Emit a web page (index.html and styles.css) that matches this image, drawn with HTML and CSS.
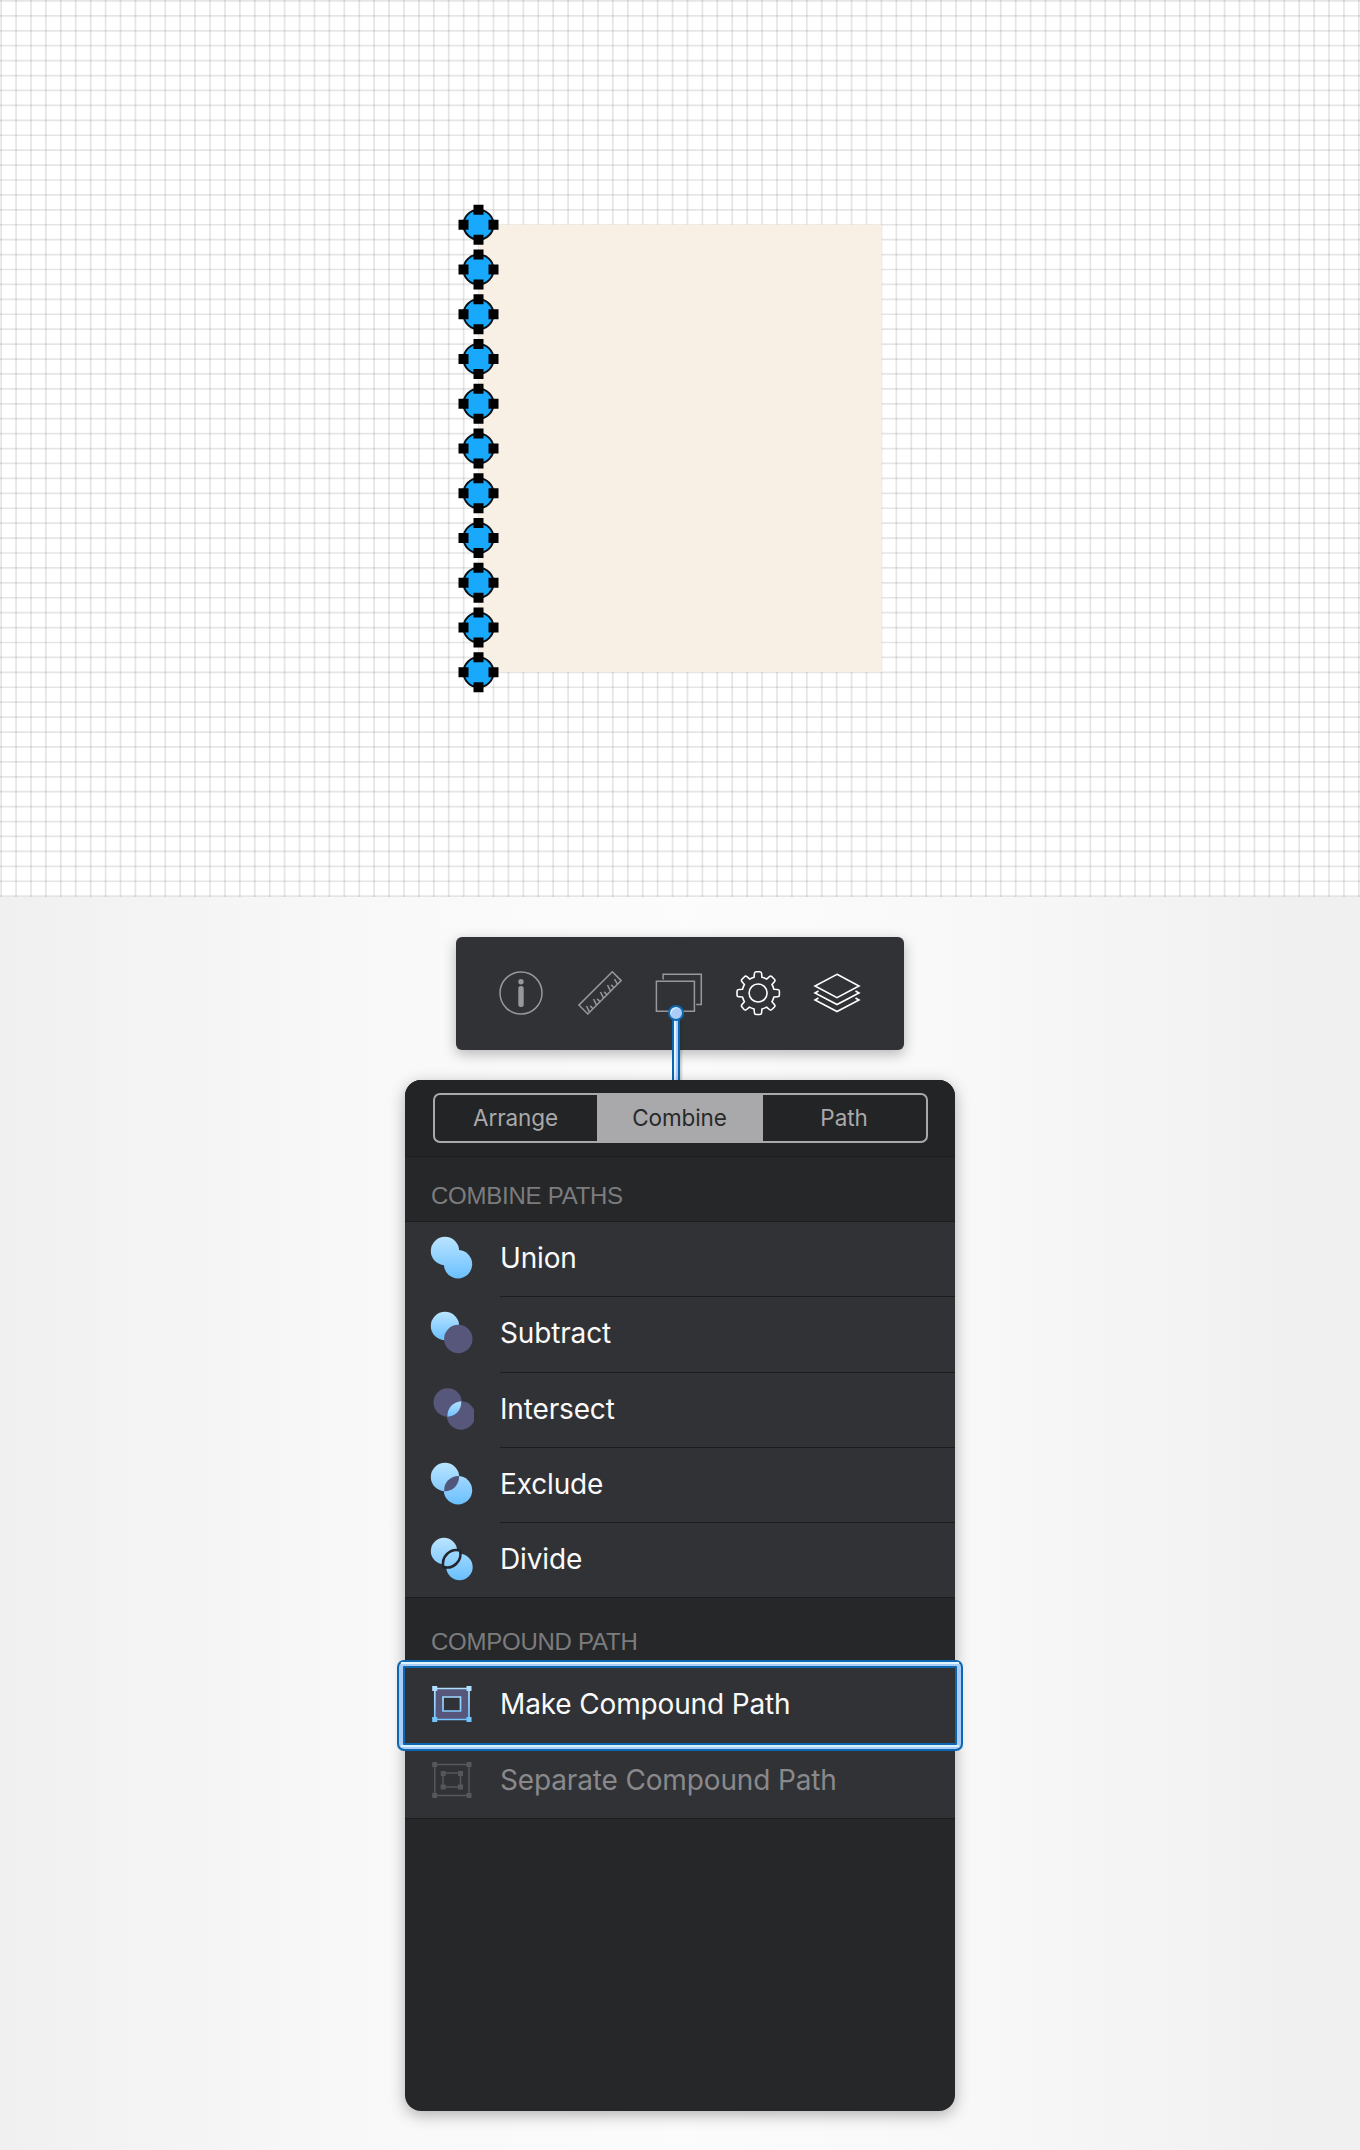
FILE: index.html
```html
<!DOCTYPE html>
<html lang="en">
<head>
<meta charset="utf-8">
<title>Combine Paths</title>
<link rel="stylesheet" href="styles.css">
</head>
<body>
<section class="canvas">
  <svg class="artwork" width="1360" height="897" viewBox="0 0 1360 897">
    <defs>
      <g id="node">
        <circle r="15" fill="#18a9fc" stroke="#0a1013" stroke-width="2"/>
        <path d="M-5-20H5v10H-5zM-5 10H5v10H-5zM-20-5h10V5h-10zM10-5h10V5H10z" fill="#000"/>
      </g>
    </defs>
    <g stroke="#828282" stroke-opacity=".21" stroke-dasharray="1.7 13.22">
      <path d="M.3 448.5H1360" stroke-width="897"/>
      <path d="M680 .1V897" stroke-width="1360"/>
    </g>
    <rect x="478.5" y="224.5" width="403" height="447.5" fill="#f8efe5"/>
    <use href="#node" x="478.5" y="224.7"/>
    <use href="#node" x="478.5" y="269.5"/>
    <use href="#node" x="478.5" y="314.3"/>
    <use href="#node" x="478.5" y="359"/>
    <use href="#node" x="478.5" y="403.8"/>
    <use href="#node" x="478.5" y="448.5"/>
    <use href="#node" x="478.5" y="493.3"/>
    <use href="#node" x="478.5" y="538"/>
    <use href="#node" x="478.5" y="582.8"/>
    <use href="#node" x="478.5" y="627.5"/>
    <use href="#node" x="478.5" y="672.3"/>
  </svg>
</section>
<main class="workspace">
  <nav class="toolbar">
    <svg width="48" height="48" viewBox="0 0 48 48" fill="none" stroke="#98989b" stroke-width="1.5">
      <circle cx="24" cy="24" r="21"/><circle cx="24" cy="12.7" r="2.7" fill="#98989b" stroke="none"/><rect x="21.3" y="17" width="5.4" height="21" rx="2.5" fill="#98989b" stroke="none"/>
    </svg>
    <svg width="48" height="48" viewBox="0 0 48 48" fill="none" stroke="#98989b" stroke-width="1.5">
      <path d="M36.3 2.7 45.2 11.6 11.8 45 2.9 36.1zM13.5 43.2l-3-6.200M17 39.700l-2.800-2.800M20.500 36.200l-3-6.200M24 32.700l-2.800-2.800M27.500 29.200l-3-6.200M31 25.700l-2.800-2.800M34.500 22.200l-3-6.200M38 18.700l-2.800-2.800M41.500 15.200l-3-5"/>
    </svg>
    <svg width="48" height="48" viewBox="0 0 48 48" fill="none" stroke="#98989b" stroke-width="1.5">
      <path d="M1.4 12.3h38v30h-38zM8.1 10.5V5.2h38.2v30.2h-5"/>
    </svg>
    <svg width="48" height="48" viewBox="0 0 48 48" fill="none" stroke="#fff" stroke-width="1.6" stroke-linejoin="round">
      <circle cx="24.1" cy="24" r="9"/>
      <path d="M20.4 4.5Q20.5 2.7 22.2 2.7h3.6q1.7 0 1.8 1.8l.3 3.7q2.6.7 4.7 1.9l2.8-2.4q1.3-1.1 2.5 0l2.5 2.5q1.1 1.2 0 2.5l-2.4 2.8q1.2 2.1 1.9 4.7l3.7.3q1.8.1 1.8 1.8v3.6q0 1.7-1.8 1.8l-3.7.3q-.7 2.6-1.9 4.7l2.4 2.8q1.1 1.3 0 2.5l-2.5 2.5q-1.2 1.1-2.5 0l-2.8-2.4q-2.1 1.2-4.7 1.9l-.3 3.7q-.1 1.8-1.8 1.8h-3.6q-1.7 0-1.8-1.8l-.3-3.7q-2.6-.7-4.7-1.9l-2.8 2.4q-1.3 1.1-2.5 0L8 38q-1.1-1.2 0-2.5l2.4-2.8Q9.2 30.6 8.5 28l-3.7-.3Q3 27.6 3 25.9v-3.6q0-1.7 1.8-1.8l3.7-.3q.7-2.6 1.9-4.7L8 12.7q-1.1-1.3 0-2.5l2.5-2.5q1.2-1.1 2.5 0l2.8 2.4q2.1-1.2 4.3-1.9z"/>
    </svg>
    <svg width="48" height="48" viewBox="0 0 48 48" fill="none" stroke="#fff" stroke-width="1.6">
      <path d="M24 5.3 46 17 24 28.7 2 17zM5.5 22 2 24l22 11.5L46 24l-3.500-2M5.500 29 2 31l22 11.500L46 31l-3.500-2"/>
    </svg>
  </nav>

  <div class="connector"></div><div class="connector-knob"></div>

  <section class="panel">
    <header class="panel-head">
      <div class="tabs"><button class="tab">Arrange</button><button class="tab active">Combine</button><button class="tab">Path</button></div>
    </header>
    <h2 class="group-title">COMBINE PATHS</h2>
    <ul class="group">
      <li class="row">
        <svg class="icon" width="46" height="46" viewBox="0 0 46 46">
          <defs>
            <linearGradient id="sky" gradientUnits="userSpaceOnUse" x1="0" y1="2" x2="0" y2="44"><stop offset="0" stop-color="#b9e4ff"/><stop offset="1" stop-color="#6abfff"/></linearGradient>
            <linearGradient id="lens" gradientUnits="userSpaceOnUse" x1="0" y1="14" x2="0" y2="32"><stop offset="0" stop-color="#b9e4ff"/><stop offset="1" stop-color="#6abfff"/></linearGradient>
            <linearGradient id="disc" gradientUnits="userSpaceOnUse" x1="0" y1="2" x2="0" y2="30"><stop offset="0" stop-color="#b9e4ff"/><stop offset="1" stop-color="#6abfff"/></linearGradient>
          </defs>
          <g fill="url(#sky)"><circle cx="16" cy="16" r="14.2"/><circle cx="29" cy="29.200" r="14.200"/></g>
        </svg><span class="label">Union</span></li>
      <li class="row">
        <svg class="icon" width="46" height="46" viewBox="0 0 46 46"><circle cx="16" cy="16" r="14.200" fill="url(#disc)"/><circle cx="29.300" cy="29" r="14.200" fill="#56577a"/></svg><span class="label">Subtract</span></li>
      <li class="row">
        <svg class="icon" width="46" height="46" viewBox="0 0 46 46"><clipPath id="cut"><rect width="45" height="46"/></clipPath><g clip-path="url(#cut)"><circle cx="18.700" cy="16.500" r="14.200" fill="#56577a"/><circle cx="32" cy="29.500" r="14.200" fill="#56577a"/></g><path d="M32.200 15.300A14.200 14.200 0 0 1 18.500 30.700A14.200 14.200 0 0 1 32.200 15.300z" fill="url(#lens)"/></svg><span class="label">Intersect</span></li>
      <li class="row">
        <svg class="icon" width="46" height="46" viewBox="0 0 46 46"><g fill="url(#sky)"><circle cx="16" cy="16" r="14.200"/><circle cx="29" cy="29.200" r="14.200"/></g><path d="M30 14.900A14.200 14.200 0 0 1 15.200 30.300A14.200 14.200 0 0 1 30 14.900z" fill="#51577c"/></svg><span class="label">Exclude</span></li>
      <li class="row">
        <svg class="icon" width="46" height="46" viewBox="0 0 46 46"><g fill="url(#sky)"><circle cx="15" cy="15" r="13.200"/><circle cx="30.500" cy="31" r="13.200"/></g><path d="M31 14.500A13.500 13.500 0 0 1 14.500 31A13.500 13.500 0 0 1 31 14.500z" fill="url(#sky)" stroke="#24262d" stroke-width="2.500"/></svg><span class="label">Divide</span></li>
    </ul>
    <h2 class="group-title second">COMPOUND PATH</h2>
    <ul class="group">
      <li class="row selected">
        <svg class="icon" width="46" height="46" viewBox="0 0 46 46">
          <path d="M5.800 7.500H40v31H5.800zM13.500 16v14h18V16z" fill="#56577a" fill-rule="evenodd"/>
          <path d="M5.800 7.500H40v31H5.800zM14 16h17.500v14H14z" fill="none" stroke="url(#sky)" stroke-width="1.700"/>
          <path d="M3.200 5h5v5h-5zM37.500 5h5v5h-5zM3.200 36h5v5h-5zM37.500 36h5v5h-5z" fill="url(#sky)"/>
        </svg><span class="label">Make Compound Path</span></li>
      <li class="row disabled">
        <svg class="icon" width="46" height="46" viewBox="0 0 46 46">
          <path d="M5.800 7.500H40v31H5.800zM14 16h17.500v14H14z" fill="none" stroke="#56575a" stroke-width="1.500"/>
          <path d="M3.200 5h5v5h-5zM37.500 5h5v5h-5zM3.200 36h5v5h-5zM37.500 36h5v5h-5zM11.700 14h5v5h-5zM29 14h5v5h-5zM11.700 27.500h5v5h-5zM29 27.500h5v5h-5z" fill="#56575a"/>
        </svg><span class="label">Separate Compound Path</span></li>
    </ul>
    <div class="focus-frame"></div>
  </section>
</main>
</body>
</html>
```
FILE: styles.css
```css
* { box-sizing: border-box; }
body { margin: 0; width: 1360px; height: 2150px; font-family: Inter, "Liberation Sans", sans-serif; background: #fafafa; }

.canvas { height: 897px; background: #fff; }
.artwork { display: block; }

.workspace {
  position: relative;
  height: 1253px;
  padding-top: 40px;
  display: flex;
  flex-direction: column;
  align-items: center;
  gap: 30px;
  background: linear-gradient(to right, #f0f0f0, #f8f8f8 25%, #fcfcfc 50%, #f8f8f8 72%, #f0f0f0 95%);
}

.toolbar {
  width: 448px;
  height: 113px;
  padding: 0 2px 2px 0;
  flex: none;
  display: flex;
  align-items: center;
  justify-content: center;
  gap: 31.2px;
  border-radius: 6px;
  background: #313236;
  box-shadow: 0 4px 14px rgba(0,0,0,.28);
}

.connector {
  position: absolute;
  left: 672px;
  top: 120px;
  width: 8px;
  height: 63px;
  border: solid #0d67b0;
  border-width: 0 2px;
  background: linear-gradient(to right, #e6f4ff 50%, #a9cdf8 50%);
  box-shadow: 2px 1px 2px rgba(0,40,70,.2);
}
.connector-knob {
  position: absolute;
  left: 668px;
  top: 108px;
  width: 16px;
  height: 16px;
  border: 2.5px solid #0d67b0;
  border-radius: 50%;
  background: #a9cdf8;
  box-shadow: inset 1px 1px 1px #e6f4ff;
}

.panel {
  position: relative;
  width: 550px;
  height: 1031px;
  flex: none;
  border-radius: 16px;
  background: #262729;
  box-shadow: 0 4px 16px rgba(0,0,0,.3);
}
.panel-head {
  height: 77px;
  padding: 13px 27.5px 0;
  border-radius: 16px 16px 0 0;
  border-bottom: 1px solid #1c1d1f;
  background: #232426;
}
.tabs {
  display: flex;
  height: 50px;
  border: 2px solid #a9a9ab;
  border-radius: 7px;
  overflow: hidden;
}
.tab {
  flex: 1;
  padding: 0 0 2px;
  border: 0;
  background: transparent;
  color: #a9a9ab;
  font: 400 22.5px Inter, sans-serif;
  letter-spacing: -.1px;
}
.tab:first-child { flex: 0 0 162px; }
.tab.active { flex: 0 0 166px; background: #a9a9ab; color: #28292b; }

.group-title {
  margin: 0;
  height: 64px;
  padding: 23px 0 0 26px;
  color: #7c7c7e;
  font: 400 24px/32px "Liberation Sans", Arial, sans-serif;
  letter-spacing: -.25px;
}
.group-title.second { height: 69px; padding-top: 28px; }

.group { list-style: none; margin: 0; padding: 0; border-top: 1px solid #1b1c1e; background: #313236; }
.row { display: flex; height: 75.3px; padding-left: 24px; gap: 25px; }
.icon { flex: none; margin-top: 13px; }
.label {
  flex: 1;
  line-height: 73px;
  color: #fafafa;
  font-size: 28px;
  letter-spacing: -.15px;
  border-bottom: 1px solid #1b1c1e;
}
.row:last-child { border-bottom: 1px solid #1b1c1e; }
.row:last-child .label { border-bottom: 0; }
.disabled .label { color: #89898c; }

.focus-frame {
  position: absolute;
  left: -8px;
  top: 580px;
  width: 566px;
  height: 91px;
  border: 2px solid #0d67b0;
  border-radius: 7px;
  box-shadow: inset 0 0 0 4px #a9cdf8, inset 0 0 0 6px #0d67b0;
}
.focus-frame::after {
  content: "";
  position: absolute;
  inset: 0 2px 2px;
  border-top: 2px solid #e0f3ff;
  border-bottom: 2px solid #d6f1fb;
}
```
